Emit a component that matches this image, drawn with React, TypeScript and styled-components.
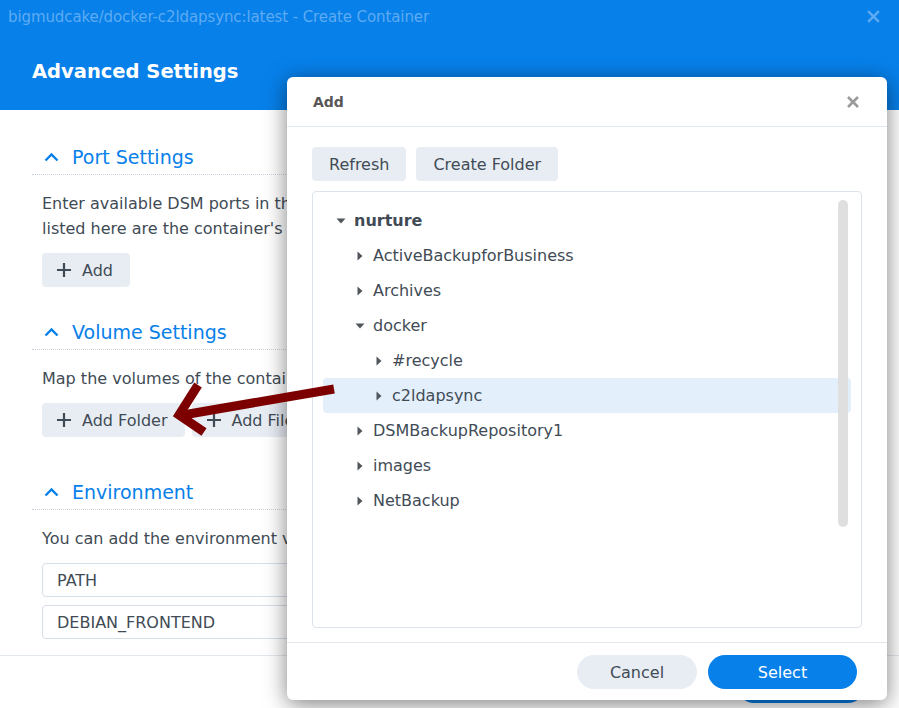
import React from "react";
import styled, { createGlobalStyle } from "styled-components";

const GlobalStyle = createGlobalStyle`
  html, body { margin: 0; padding: 0; background: #ffffff; }
  body { font-family: "DejaVu Sans", Verdana, sans-serif; }
  * { box-sizing: border-box; }
`;

const BLUE = "#0780ea";
const TEXT = "#414b55";

const Page = styled.div`
  position: relative;
  width: 899px;
  height: 708px;
  overflow: hidden;
  background: #fff;
`;

const Window = styled.div`
  display: flex;
  flex-direction: column;
  height: 100%;
`;

const TitleBar = styled.div`
  height: 33px;
  background: ${BLUE};
  display: flex;
  align-items: center;
  justify-content: space-between;
  padding: 0 19px 0 8px;
`;

const TitleText = styled.span`
  color: #5eabf1;
  font-size: 15px;
  letter-spacing: -0.1px;
`;

const HeaderBand = styled.div`
  height: 77px;
  background: ${BLUE};
  display: flex;
  align-items: center;
  padding-left: 32px;
`;

const HeaderTitle = styled.h1`
  margin: 0;
  color: #fff;
  font-size: 19.5px;
  font-weight: 700;
`;

const Body = styled.div`
  width: 287px;
  overflow: hidden;
  padding: 30px 0 0 32px;
  display: flex;
  flex-direction: column;
`;

const Section = styled.section<{ $gap: number }>`
  margin-top: ${(p) => p.$gap}px;
  width: 560px;
  display: flex;
  flex-direction: column;
`;

const SectionHeader = styled.div`
  height: 35px;
  display: flex;
  align-items: center;
  gap: 13px;
  padding-left: 12px;
  border-bottom: 1px dotted #c9d3de;
`;

const SectionTitle = styled.span`
  color: ${BLUE};
  font-size: 19px;
`;

const Desc = styled.p`
  margin: 16px 0 0 10px;
  font-size: 16px;
  line-height: 25px;
  color: ${TEXT};
  white-space: nowrap;
`;

const ButtonRow = styled.div`
  margin: 12px 0 0 10px;
  display: flex;
  gap: 7px;
`;

const ToolButton = styled.button`
  height: 34px;
  border: none;
  border-radius: 4px;
  background: #e8edf4;
  color: ${TEXT};
  font-family: inherit;
  font-size: 16px;
  display: flex;
  align-items: center;
  gap: 11px;
  padding: 0 17px 0 15px;
  white-space: nowrap;
`;

const Input = styled.div`
  height: 34px;
  margin: 0 0 0 10px;
  border: 1px solid #d7dfe8;
  border-radius: 4px;
  display: flex;
  align-items: center;
  padding-left: 14px;
  font-size: 16px;
  color: ${TEXT};
  & + & { margin-top: 8px; }
`;

const InputStack = styled.div`
  margin-top: 12px;
  display: flex;
  flex-direction: column;
`;

const OuterFooter = styled.div`
  margin-top: 16px;
  border-top: 1px solid #e3e8ee;
  padding: 13px 34px 0 0;
  display: flex;
  justify-content: flex-end;
`;

const OuterPrimary = styled.div`
  width: 128px;
  height: 34px;
  border-radius: 17px;
  background: ${BLUE};
`;

/* Dialog */
const Dialog = styled.div`
  position: absolute;
  left: 287px;
  top: 77px;
  width: 600px;
  height: 623px;
  background: #fff;
  border-radius: 6px;
  box-shadow: 0 4px 22px rgba(0, 0, 0, 0.5);
  display: flex;
  flex-direction: column;
`;

const DialogHeader = styled.div`
  height: 50px;
  border-bottom: 1px solid #e1e7ee;
  display: flex;
  align-items: center;
  justify-content: space-between;
  padding: 0 28px 0 26px;
`;

const DialogTitle = styled.span`
  font-size: 14px;
  font-weight: 700;
  color: #585656;
`;

const Toolbar = styled.div`
  display: flex;
  gap: 10px;
  padding: 20px 25px 0 25px;
`;

const PlainButton = styled.button`
  height: 34px;
  border: none;
  border-radius: 4px;
  background: #e8edf4;
  color: ${TEXT};
  font-family: inherit;
  font-size: 16px;
  padding: 0 17px;
`;

const TreePanel = styled.div`
  position: relative;
  margin: 10px 25px 0 25px;
  height: 437px;
  border: 1px solid #dde3ea;
  border-radius: 4px;
  padding: 11px 10px 10px;
`;

const Scrollbar = styled.div`
  position: absolute;
  top: 8px;
  right: 13px;
  width: 10px;
  height: 327px;
  border-radius: 5px;
  background: #dfdfdf;
`;

const TreeRow = styled.div<{ $level: number; $selected?: boolean }>`
  height: 35px;
  display: flex;
  align-items: center;
  gap: 8px;
  padding-left: ${(p) => 13 + p.$level * 19}px;
  border-radius: 4px;
  background: ${(p) => (p.$selected ? "#e3f0fc" : "transparent")};
`;

const Caret = styled.span`
  width: 10px;
  display: flex;
  align-items: center;
  justify-content: center;
`;

const TreeLabel = styled.span<{ $bold?: boolean }>`
  font-size: 16px;
  color: ${TEXT};
  font-weight: ${(p) => (p.$bold ? 700 : 400)};
`;

const DialogFooter = styled.div`
  margin-top: 14px;
  border-top: 1px solid #e3e8ee;
  padding: 12px 30px 0 0;
  display: flex;
  justify-content: flex-end;
  gap: 11px;
`;

const PillButton = styled.button<{ $primary?: boolean; $w: number }>`
  width: ${(p) => p.$w}px;
  height: 34px;
  border: none;
  border-radius: 17px;
  font-family: inherit;
  font-size: 16px;
  background: ${(p) => (p.$primary ? BLUE : "#e8edf4")};
  color: ${(p) => (p.$primary ? "#ffffff" : TEXT)};
`;

const ArrowLayer = styled.svg`
  position: absolute;
  left: 0;
  top: 0;
  pointer-events: none;
`;

const Chevron = () => (
  <svg width="15" height="10" viewBox="0 0 15 10">
    <polyline points="1.5,8.5 7.5,2.5 13.5,8.5" fill="none" stroke={BLUE} strokeWidth="2.4" />
  </svg>
);

const Plus = () => (
  <svg width="14" height="14" viewBox="0 0 14 14">
    <path d="M7 0v14M0 7h14" stroke={TEXT} strokeWidth="2.2" />
  </svg>
);

const CloseX = ({ color, size, w }: { color: string; size: number; w: number }) => (
  <svg width={size} height={size} viewBox="0 0 12 12">
    <path d="M1 1L11 11M11 1L1 11" stroke={color} strokeWidth={w} />
  </svg>
);

const CaretIcon = ({ open }: { open: boolean }) =>
  open ? (
    <svg width="10" height="6" viewBox="0 0 10 6">
      <polygon points="0.5,0.5 9.5,0.5 5,5.5" fill="#50565c" />
    </svg>
  ) : (
    <svg width="6" height="10" viewBox="0 0 6 10">
      <polygon points="0.5,0.5 5.5,5 0.5,9.5" fill="#50565c" />
    </svg>
  );

const tree: { label: string; level: number; open: boolean; bold?: boolean; selected?: boolean }[] = [
  { label: "nurture", level: 0, open: true, bold: true },
  { label: "ActiveBackupforBusiness", level: 1, open: false },
  { label: "Archives", level: 1, open: false },
  { label: "docker", level: 1, open: true },
  { label: "#recycle", level: 2, open: false },
  { label: "c2ldapsync", level: 2, open: false, selected: true },
  { label: "DSMBackupRepository1", level: 1, open: false },
  { label: "images", level: 1, open: false },
  { label: "NetBackup", level: 1, open: false },
];

export default function App() {
  return (
    <Page>
      <GlobalStyle />
      <Window>
        <TitleBar>
          <TitleText>bigmudcake/docker-c2ldapsync:latest - Create Container</TitleText>
          <CloseX color="#5eabf1" size={13} w={2.2} />
        </TitleBar>
        <HeaderBand>
          <HeaderTitle>Advanced Settings</HeaderTitle>
        </HeaderBand>
        <Body>
          <Section $gap={0}>
            <SectionHeader>
              <Chevron />
              <SectionTitle>Port Settings</SectionTitle>
            </SectionHeader>
            <Desc>
              Enter available DSM ports in the fields below.
              <br />
              listed here are the container's ports.
            </Desc>
            <ButtonRow>
              <ToolButton>
                <Plus />
                Add
              </ToolButton>
            </ButtonRow>
          </Section>
          <Section $gap={28}>
            <SectionHeader>
              <Chevron />
              <SectionTitle>Volume Settings</SectionTitle>
            </SectionHeader>
            <Desc>Map the volumes of the container.</Desc>
            <ButtonRow>
              <ToolButton>
                <Plus />
                Add Folder
              </ToolButton>
              <ToolButton>
                <Plus />
                Add File
              </ToolButton>
            </ButtonRow>
          </Section>
          <Section $gap={38}>
            <SectionHeader>
              <Chevron />
              <SectionTitle>Environment</SectionTitle>
            </SectionHeader>
            <Desc>You can add the environment variables.</Desc>
            <InputStack>
              <Input>PATH</Input>
              <Input>DEBIAN_FRONTEND</Input>
            </InputStack>
          </Section>
        </Body>
        <OuterFooter>
          <OuterPrimary />
        </OuterFooter>
      </Window>

      <Dialog>
        <DialogHeader>
          <DialogTitle>Add</DialogTitle>
          <CloseX color="#9a9a9a" size={12} w={2.6} />
        </DialogHeader>
        <Toolbar>
          <PlainButton>Refresh</PlainButton>
          <PlainButton>Create Folder</PlainButton>
        </Toolbar>
        <TreePanel>
          {tree.map((n) => (
            <TreeRow key={n.label} $level={n.level} $selected={n.selected}>
              <Caret>
                <CaretIcon open={n.open} />
              </Caret>
              <TreeLabel $bold={n.bold}>{n.label}</TreeLabel>
            </TreeRow>
          ))}
          <Scrollbar />
        </TreePanel>
        <DialogFooter>
          <PillButton $w={120}>Cancel</PillButton>
          <PillButton $w={149} $primary>
            Select
          </PillButton>
        </DialogFooter>
      </Dialog>

      <ArrowLayer width="899" height="708" viewBox="0 0 899 708">
        <line x1="334" y1="389" x2="183" y2="415" stroke="#7d0000" strokeWidth="9" />
        <polyline
          points="198,385 179,415 204,432"
          fill="none"
          stroke="#7d0000"
          strokeWidth="9"
          strokeLinejoin="miter"
        />
      </ArrowLayer>
    </Page>
  );
}
